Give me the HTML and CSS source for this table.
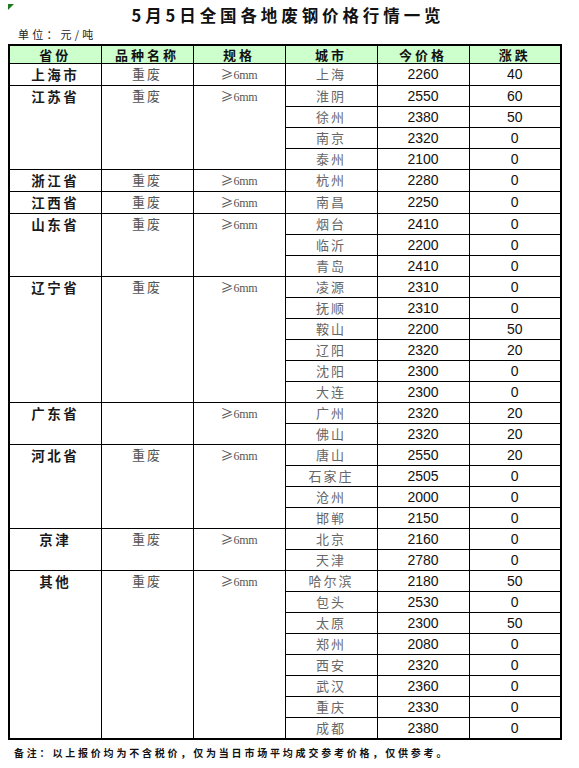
FILE: index.html
```html
<!DOCTYPE html>
<html lang="zh-CN">
<head>
<meta charset="utf-8">
<title>5月5日全国各地废钢价格行情一览</title>
<link rel="stylesheet" href="styles.css">
</head>
<body>
<div class="sheet">
  <span class="marker"></span>
  <h1 class="title">5月5日全国各地废钢价格行情一览</h1>
  <div class="unit">单位：元/吨</div>
  <table class="grid">
    <colgroup>
      <col class="c"><col class="c"><col class="c"><col class="c"><col class="c"><col class="c">
    </colgroup>
    <thead>
      <tr><th>省份</th><th>品种名称</th><th>规格</th><th>城市</th><th>今价格</th><th>涨跌</th></tr>
    </thead>
    <tbody>
      <tr><td class="prov">上海市</td><td class="kind">重废</td><td class="spec">≥<span class="mm">6mm</span></td><td class="city">上海</td><td class="num">2260</td><td class="num">40</td></tr>

      <tr><td class="prov" rowspan="4">江苏省</td><td class="kind" rowspan="4">重废</td><td class="spec" rowspan="4">≥<span class="mm">6mm</span></td><td class="city">淮阴</td><td class="num">2550</td><td class="num">60</td></tr>
      <tr><td class="city">徐州</td><td class="num">2380</td><td class="num">50</td></tr>
      <tr><td class="city">南京</td><td class="num">2320</td><td class="num">0</td></tr>
      <tr><td class="city">泰州</td><td class="num">2100</td><td class="num">0</td></tr>

      <tr><td class="prov">浙江省</td><td class="kind">重废</td><td class="spec">≥<span class="mm">6mm</span></td><td class="city">杭州</td><td class="num">2280</td><td class="num">0</td></tr>
      <tr><td class="prov">江西省</td><td class="kind">重废</td><td class="spec">≥<span class="mm">6mm</span></td><td class="city">南昌</td><td class="num">2250</td><td class="num">0</td></tr>

      <tr><td class="prov" rowspan="3">山东省</td><td class="kind" rowspan="3">重废</td><td class="spec" rowspan="3">≥<span class="mm">6mm</span></td><td class="city">烟台</td><td class="num">2410</td><td class="num">0</td></tr>
      <tr><td class="city">临沂</td><td class="num">2200</td><td class="num">0</td></tr>
      <tr><td class="city">青岛</td><td class="num">2410</td><td class="num">0</td></tr>

      <tr><td class="prov" rowspan="6">辽宁省</td><td class="kind" rowspan="6">重废</td><td class="spec" rowspan="6">≥<span class="mm">6mm</span></td><td class="city">凌源</td><td class="num">2310</td><td class="num">0</td></tr>
      <tr><td class="city">抚顺</td><td class="num">2310</td><td class="num">0</td></tr>
      <tr><td class="city">鞍山</td><td class="num">2200</td><td class="num">50</td></tr>
      <tr><td class="city">辽阳</td><td class="num">2320</td><td class="num">20</td></tr>
      <tr><td class="city">沈阳</td><td class="num">2300</td><td class="num">0</td></tr>
      <tr><td class="city">大连</td><td class="num">2300</td><td class="num">0</td></tr>

      <tr><td class="prov" rowspan="2">广东省</td><td class="kind" rowspan="2"></td><td class="spec" rowspan="2">≥<span class="mm">6mm</span></td><td class="city">广州</td><td class="num">2320</td><td class="num">20</td></tr>
      <tr><td class="city">佛山</td><td class="num">2320</td><td class="num">20</td></tr>

      <tr><td class="prov" rowspan="4">河北省</td><td class="kind" rowspan="4">重废</td><td class="spec" rowspan="4">≥<span class="mm">6mm</span></td><td class="city">唐山</td><td class="num">2550</td><td class="num">20</td></tr>
      <tr><td class="city">石家庄</td><td class="num">2505</td><td class="num">0</td></tr>
      <tr><td class="city">沧州</td><td class="num">2000</td><td class="num">0</td></tr>
      <tr><td class="city">邯郸</td><td class="num">2150</td><td class="num">0</td></tr>

      <tr><td class="prov" rowspan="2">京津</td><td class="kind" rowspan="2">重废</td><td class="spec" rowspan="2">≥<span class="mm">6mm</span></td><td class="city">北京</td><td class="num">2160</td><td class="num">0</td></tr>
      <tr><td class="city">天津</td><td class="num">2780</td><td class="num">0</td></tr>

      <tr><td class="prov" rowspan="8">其他</td><td class="kind" rowspan="8">重废</td><td class="spec" rowspan="8">≥<span class="mm">6mm</span></td><td class="city">哈尔滨</td><td class="num">2180</td><td class="num">50</td></tr>
      <tr><td class="city">包头</td><td class="num">2530</td><td class="num">0</td></tr>
      <tr><td class="city">太原</td><td class="num">2300</td><td class="num">50</td></tr>
      <tr><td class="city">郑州</td><td class="num">2080</td><td class="num">0</td></tr>
      <tr><td class="city">西安</td><td class="num">2320</td><td class="num">0</td></tr>
      <tr><td class="city">武汉</td><td class="num">2360</td><td class="num">0</td></tr>
      <tr><td class="city">重庆</td><td class="num">2330</td><td class="num">0</td></tr>
      <tr><td class="city">成都</td><td class="num">2380</td><td class="num">0</td></tr>
    </tbody>
  </table>
  <div class="note">备注：以上报价均为不含税价，仅为当日市场平均成交参考价格，仅供参考。</div>
</div>
</body>
</html>
```

FILE: styles.css
```css
html, body {
  margin: 0;
  padding: 0;
  background: #ffffff;
}

body {
  font-family: "Noto Sans CJK SC", "Noto Sans", sans-serif;
  color: #111;
}

.sheet {
  position: relative;
  width: 579px;
  padding: 0 0 0 8px;
  box-sizing: border-box;
}

.marker {
  position: absolute;
  left: 8px;
  top: 4px;
  width: 0;
  height: 0;
  border-top: 6px solid #1f7a1f;
  border-right: 6px solid transparent;
}

.title {
  margin: 0;
  padding: 5px 0 0 0;
  height: 20px;
  line-height: 20px;
  font-size: 16.5px;
  font-weight: 700;
  letter-spacing: 3.9px;
  text-align: center;
  width: 560px;
  color: #111;
}

.unit {
  height: 19px;
  line-height: 19px;
  padding-left: 10px;
  font-size: 11px;
  letter-spacing: 3.2px;
  color: #222;
}

.grid {
  border-collapse: collapse;
  table-layout: fixed;
  width: 554px;
  border: 2px solid #000;
}

.grid col.c {
  width: 92px;
}

.grid th,
.grid td {
  border: 1px solid #000;
  padding: 0;
  height: 20px;
  line-height: 20px;
  text-align: center;
  vertical-align: top;
  white-space: nowrap;
  overflow: hidden;
}

.grid th {
  background: #ccffcc;
  font-size: 13px;
  font-weight: 700;
  letter-spacing: 3px;
  height: 17px;
  line-height: 17px;
  border-bottom: 1px solid #000;
}

.grid .prov {
  font-size: 13.5px;
  font-weight: 700;
  letter-spacing: 2.5px;
  color: #1a1a1a;
}

.grid .kind {
  font-size: 13px;
  letter-spacing: 2px;
  color: #555;
}

.grid .spec {
  font-size: 13px;
  color: #555;
}

.grid .mm {
  font-family: "Liberation Serif", serif;
  font-size: 12px;
  letter-spacing: -0.3px;
}

.grid .city {
  font-size: 13px;
  letter-spacing: 2px;
  color: #666;
}

.grid .num {
  font-family: "Liberation Sans", Arial, sans-serif;
  font-size: 14px;
  color: #111;
}

.note {
  padding: 5px 0 0 6px;
  font-size: 10px;
  font-weight: 700;
  letter-spacing: 2.8px;
  line-height: 16px;
  color: #111;
}
```
